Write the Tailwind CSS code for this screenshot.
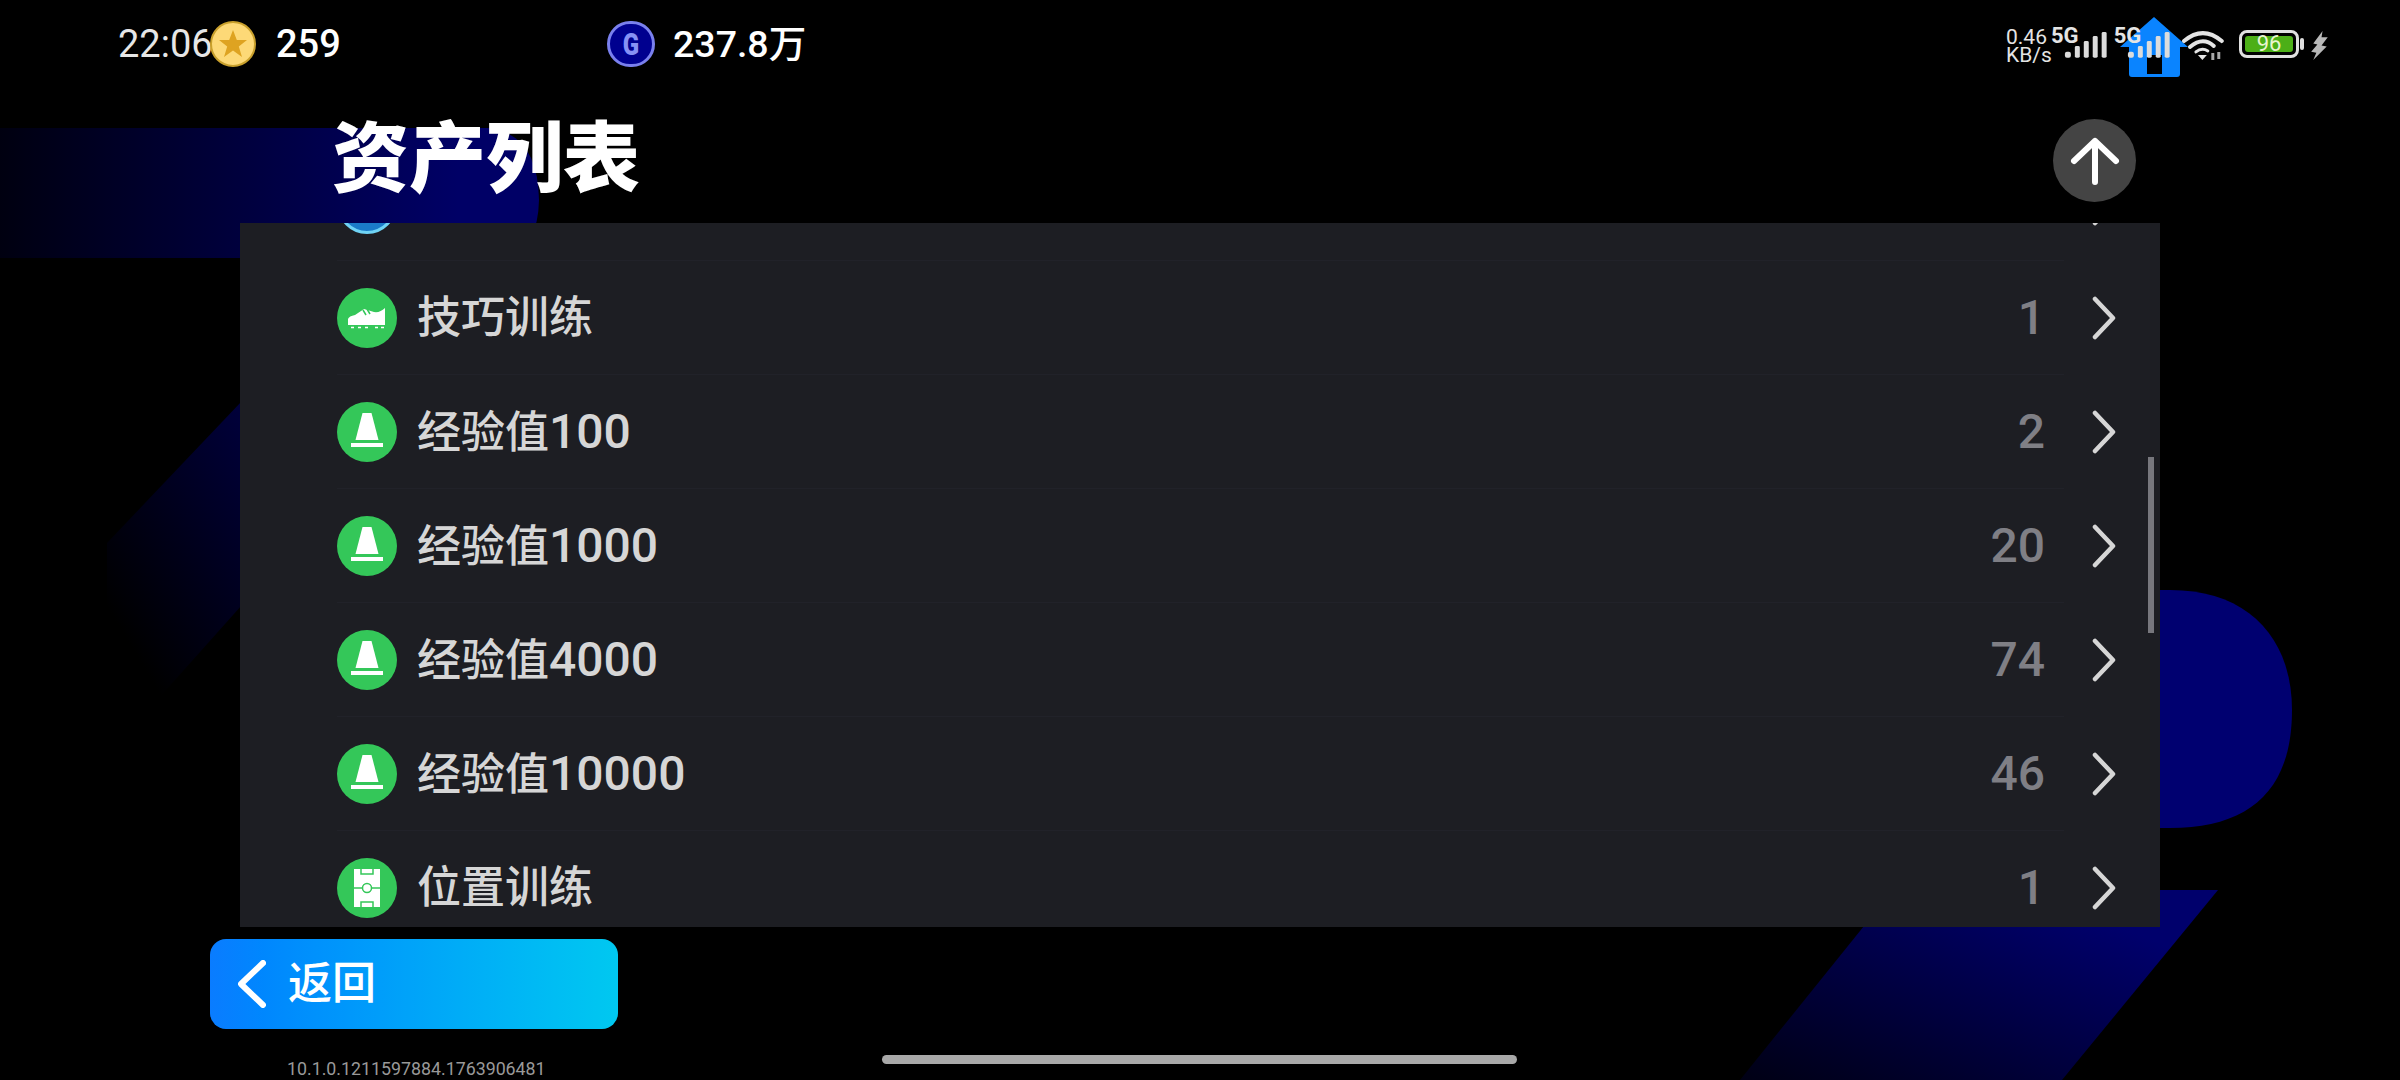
<!DOCTYPE html>
<html lang="zh-CN">
<head>
  <meta charset="UTF-8" />
  <meta name="viewport" content="width=device-width, initial-scale=1.0"/>
  <title>资产列表</title>
  <script src="https://cdn.jsdelivr.net/npm/@tailwindcss/browser@4"></script>
</head>
<body class="bg-black">
  <svg class="hidden">
    <symbol id="cone" viewBox="0 0 60 60">
      <path d="M25.500 11H34.500L41.500 38H18.500Z" fill="#fff"/>
      <rect x="14" y="41" width="32" height="4" fill="#fff"/>
    </symbol>
    <symbol id="chevron" viewBox="0 0 24 44">
      <path d="M3 3L21 22L3 41" fill="none" stroke="#d6d6d6" stroke-width="4.500" stroke-linecap="round" stroke-linejoin="round"/>
    </symbol>
  </svg>

  <div class="relative w-[2400px] h-[1080px] overflow-hidden bg-black font-[family-name:Roboto,'Noto_Sans_CJK_SC',sans-serif]">

    <!-- background shapes -->
    <svg class="absolute inset-0" width="2400" height="1080" viewBox="0 0 2400 1080">
      <defs>
        <linearGradient id="band" x1="0" y1="0" x2="1" y2="0">
          <stop offset="0" stop-color="#000010"/>
          <stop offset="0.85" stop-color="#000066"/>
        </linearGradient>
        <linearGradient id="hex" x1="0.9" y1="0.1" x2="0.2" y2="0.9">
          <stop offset="0" stop-color="#000048"/>
          <stop offset="1" stop-color="#000000"/>
        </linearGradient>
        <linearGradient id="slant" x1="0" y1="1" x2="1" y2="0">
          <stop offset="0" stop-color="#000014"/>
          <stop offset="0.8" stop-color="#00006c"/>
        </linearGradient>
      </defs>
      <path d="M0 128H490Q538 135 539 200Q538 258 490 258H0Z" fill="url(#band)"/>
      <path d="M300 340L107 543V630L150 708L300 540Z" fill="url(#hex)"/>
      <path d="M2000 590H2170C2250 590 2292 640 2292 710C2292 790 2250 828 2170 828H2000Z" fill="#000070"/>
      <path d="M1893 890H2218L2062 1080H1740Z" fill="url(#slant)"/>
    </svg>

    <div class="relative flex flex-col h-full">
      <!-- status bar -->
      <div class="flex items-start justify-between h-[88px] pl-[118px] pr-[72px]">
        <div class="flex items-center h-[88px]">
          <span class="w-[92px] text-[38px] text-[#e6e6e6]">22:06</span>
          <svg class="w-[46px] h-[46px]" viewBox="0 0 46 46">
            <circle cx="23" cy="23" r="22" fill="#fdd977" stroke="#c9a02c" stroke-width="2"/>
            <path d="M23 9L26.800 19H37L28.800 25.500L32 36L23 29.500L14 36L17.200 25.500L9 19H19.200Z" fill="#dea321"/>
          </svg>
          <span class="ml-[20px] w-[331px] text-[38px] font-medium text-white">259</span>
          <div class="flex items-center justify-center w-[48px] h-[46px] rounded-full bg-[#00008f] border-[3px] border-[#7a80ee] text-[32px] font-black text-[#8791f5]"><span class="scale-x-75">G</span></div>
          <span class="ml-[18px] text-[37.500px] font-medium text-white">237.8万</span>
        </div>

        <div class="relative flex items-start gap-[7px] w-[322px] pt-[28px] text-[#e4e4e4]">
          <div class="w-[40px] text-[21px] leading-[18px]">0.46<br/>KB/s</div>
          <div class="relative ml-[-2px] w-[56px] h-[30px]">
            <span class="absolute left-0 top-[-2px] text-[22px] leading-[20px] font-bold">5G</span>
            <svg class="absolute inset-0" viewBox="0 0 56 30" fill="#dcdcdc">
              <rect x="14" y="24" width="6" height="6" rx="2"/><rect x="24" y="18" width="5" height="12" rx="1.500"/><rect x="33" y="13" width="5" height="17" rx="1.500"/><rect x="42" y="8" width="5" height="22" rx="1.500"/><rect x="51" y="4" width="5" height="26" rx="1.500"/>
            </svg>
          </div>
          <!-- home icon sits under the second signal -->
          <svg class="absolute left-[114px] top-[17px] w-[68px] h-[60px]" viewBox="0 0 68 60">
            <path d="M34 0L68 30H60V57Q60 60 57 60H12Q9 60 9 57V30H0Z" fill="#0a84ff"/>
            <rect x="27" y="38" width="15" height="19" fill="#000"/>
          </svg>
          <div class="relative w-[57px] h-[30px]">
            <span class="absolute left-0 top-[-2px] text-[22px] leading-[20px] font-bold">5G</span>
            <svg class="absolute inset-0" viewBox="0 0 57 30" fill="#dcdcdc">
              <rect x="14" y="24" width="6" height="6" rx="2"/><rect x="24" y="18" width="5" height="12" rx="1.500"/><rect x="33" y="13" width="5" height="17" rx="1.500"/><rect x="42" y="8" width="5" height="22" rx="1.500"/><rect x="51" y="4" width="5" height="26" rx="1.500"/>
            </svg>
          </div>
          <svg class="relative ml-[5px] mt-[2px] w-[42px] h-[30px]" viewBox="0 0 42 30" fill="none" stroke="#e4e4e4" stroke-width="4" stroke-linecap="round">
            <path d="M2 11Q21 -5 40 11"/>
            <path d="M8 17Q21 6 32 16"/>
            <path d="M14 22Q20 17 26 21" stroke-width="3"/>
            <path d="M16 25H25L20.500 30Z" fill="#e4e4e4" stroke="none"/>
            <path d="M31 23V30M37 22V29" stroke-width="3" stroke="#a8a8a8" stroke-linecap="butt"/>
          </svg>
          <div class="flex items-center ml-[8px] mt-[2px]">
            <div class="w-[60px] h-[28px] p-[3px] rounded-[8px] border-[3px] border-[#e0e0e0]">
              <div class="flex items-center justify-center h-full rounded-[3px] bg-[#4caf17] text-[22px] leading-none text-[#e8f5d0]">96</div>
            </div>
            <div class="ml-[1px] w-[4px] h-[12px] rounded-sm bg-[#e0e0e0]"></div>
          </div>
          <svg class="mt-[3px] w-[17px] h-[29px]" viewBox="0 0 16 28" fill="#b8b8b8">
            <path d="M11 0L2 12L6 13L0 20L5 21L2 28L15 15L10 14L16 6L10 6Z"/>
          </svg>
        </div>
      </div>

      <!-- title -->
      <div class="flex items-center justify-between h-[135px] pl-[332px] pr-[264px]">
        <h1 class="text-[77px] leading-none font-black text-white mt-[9px]">资产列表</h1>
        <div class="flex items-center justify-center w-[83px] h-[83px] mt-[10px] rounded-full bg-[#444444]">
          <svg class="w-[50px] h-[48px]" viewBox="0 0 50 48" fill="none" stroke="#fff" stroke-width="6" stroke-linecap="round" stroke-linejoin="round">
            <path d="M25 4V45M4 24L25 4L46 24"/>
          </svg>
        </div>
      </div>

      <!-- asset list -->
      <div class="relative ml-[240px] w-[1920px] h-[704px] overflow-hidden bg-[#1d1e23]">
        <div class="-mt-[77px]">
          <div class="relative flex items-center h-[115px] ml-[97px] mr-[44px] after:absolute after:bottom-0 after:left-0 after:right-[52px] after:h-px after:bg-[#212229]">
            <div class="w-[60px] h-[60px] rounded-full bg-[#1a7bc8] border-[3px] border-[#6fd3f5]"></div>
            <span class="ml-[20px] text-[44px] font-medium text-[#d6d6d6]">技能提升道具</span>
            <svg class="ml-auto w-[24px] h-[44px]"><use href="#chevron"/></svg>
          </div>

          <div class="relative flex items-center h-[114px] ml-[97px] mr-[44px] after:absolute after:bottom-0 after:left-0 after:right-[52px] after:h-px after:bg-[#212229]">
            <svg class="w-[60px] h-[60px] rounded-full bg-[#34c759]" viewBox="0 0 60 60">
              <path d="M11 37V31Q12 28 18 27L27 21L37 24Q43 25 48 20V37Z" fill="#fff"/>
              <path d="M26 22L29 27M30 21L33 26" stroke="#34c759" stroke-width="1.500"/>
              <path d="M14 39.500H17M21 39.500H24M28 39.500H31M38 39.500H41M44 39.500H47" stroke="#fff" stroke-width="1.500"/>
            </svg>
            <span class="ml-[20px] text-[44px] font-medium text-[#d6d6d6]">技巧训练</span>
            <span class="ml-auto text-[48px] font-medium text-[#7f7f85]">1</span>
            <svg class="ml-[47px] w-[24px] h-[44px]"><use href="#chevron"/></svg>
          </div>

          <div class="relative flex items-center h-[114px] ml-[97px] mr-[44px] after:absolute after:bottom-0 after:left-0 after:right-[52px] after:h-px after:bg-[#212229]">
            <svg class="w-[60px] h-[60px] rounded-full bg-[#34c759]"><use href="#cone"/></svg>
            <span class="ml-[20px] text-[44px] font-medium text-[#d6d6d6]">经验值<span class="text-[48px]">100</span></span>
            <span class="ml-auto text-[48px] font-medium text-[#7f7f85]">2</span>
            <svg class="ml-[47px] w-[24px] h-[44px]"><use href="#chevron"/></svg>
          </div>

          <div class="relative flex items-center h-[114px] ml-[97px] mr-[44px] after:absolute after:bottom-0 after:left-0 after:right-[52px] after:h-px after:bg-[#212229]">
            <svg class="w-[60px] h-[60px] rounded-full bg-[#34c759]"><use href="#cone"/></svg>
            <span class="ml-[20px] text-[44px] font-medium text-[#d6d6d6]">经验值<span class="text-[48px]">1000</span></span>
            <span class="ml-auto text-[48px] font-medium text-[#7f7f85]">20</span>
            <svg class="ml-[47px] w-[24px] h-[44px]"><use href="#chevron"/></svg>
          </div>

          <div class="relative flex items-center h-[114px] ml-[97px] mr-[44px] after:absolute after:bottom-0 after:left-0 after:right-[52px] after:h-px after:bg-[#212229]">
            <svg class="w-[60px] h-[60px] rounded-full bg-[#34c759]"><use href="#cone"/></svg>
            <span class="ml-[20px] text-[44px] font-medium text-[#d6d6d6]">经验值<span class="text-[48px]">4000</span></span>
            <span class="ml-auto text-[48px] font-medium text-[#7f7f85]">74</span>
            <svg class="ml-[47px] w-[24px] h-[44px]"><use href="#chevron"/></svg>
          </div>

          <div class="relative flex items-center h-[114px] ml-[97px] mr-[44px] after:absolute after:bottom-0 after:left-0 after:right-[52px] after:h-px after:bg-[#212229]">
            <svg class="w-[60px] h-[60px] rounded-full bg-[#34c759]"><use href="#cone"/></svg>
            <span class="ml-[20px] text-[44px] font-medium text-[#d6d6d6]">经验值<span class="text-[48px]">10000</span></span>
            <span class="ml-auto text-[48px] font-medium text-[#7f7f85]">46</span>
            <svg class="ml-[47px] w-[24px] h-[44px]"><use href="#chevron"/></svg>
          </div>

          <div class="flex items-center h-[114px] ml-[97px] mr-[44px]">
            <svg class="w-[60px] h-[60px] rounded-full bg-[#34c759]" viewBox="0 0 60 60">
              <rect x="17" y="11" width="26" height="38" fill="#fff"/>
              <path d="M17 30H43" stroke="#34c759" stroke-width="1.500"/>
              <circle cx="30" cy="30" r="4.500" fill="#fff" stroke="#34c759" stroke-width="1.500"/>
              <path d="M24 11V16H36V11M24 49V44H36V49" fill="none" stroke="#34c759" stroke-width="1.500"/>
            </svg>
            <span class="ml-[20px] text-[44px] font-medium text-[#d6d6d6]">位置训练</span>
            <span class="ml-auto text-[48px] font-medium text-[#7f7f85]">1</span>
            <svg class="ml-[47px] w-[24px] h-[44px]"><use href="#chevron"/></svg>
          </div>
        </div>
        <!-- scrollbar -->
        <div class="absolute right-[6px] top-[234px] w-[6px] h-[176px] bg-[#77777d]"></div>
      </div>

      <!-- back button -->
      <div class="flex items-center mt-[12px] ml-[210px] w-[408px] h-[90px] pl-[28px] rounded-[16px] bg-gradient-to-r from-[#0a7cff] to-[#00c8f0]">
        <svg class="w-[28px] h-[48px]" viewBox="0 0 28 48" fill="none" stroke="#fff" stroke-width="6" stroke-linecap="round" stroke-linejoin="round">
          <path d="M25 3L3 24L25 45"/>
        </svg>
        <span class="ml-[22px] text-[44px] font-medium text-white">返回</span>
      </div>

      <div class="mt-[30px] ml-[287px] text-[17.800px] leading-[20px] text-[#999999]">10.1.0.1211597884.1763906481</div>
    </div>

    <!-- gesture bar -->
    <div class="absolute left-[882px] top-[1055px] w-[635px] h-[9px] rounded-full bg-[#a8a8a8]"></div>
  </div>
</body>
</html>
